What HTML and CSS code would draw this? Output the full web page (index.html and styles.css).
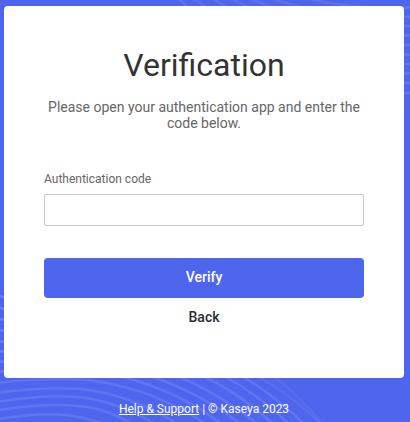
FILE: index.html
```
<!DOCTYPE html>
<html lang="en">
<head>
<meta charset="UTF-8">
<title>Verification</title>
<meta name="viewport" content="width=device-width, initial-scale=1.0">
<link rel="stylesheet" href="styles.css">
</head>
<body>
<svg class="waves" width="410" height="422" viewBox="0 0 410 422" aria-hidden="true">
    <g class="waves-top">
        <path d="M179 -1 L188 7"/>
        <path d="M194 -1 L205 7"/>
        <path d="M213 -1 L227 7"/>
        <path d="M231 -1 L248 7"/>
        <path d="M250 -1 L271 7"/>
        <path d="M273 -1 L300 7"/>
        <path d="M310 -1 Q335 5 365 7"/>
    </g>
    <g class="waves-right">
        <path d="M402 7.5h9M402 17h9M402 26h9M402 35.5h9M402 45h9M402 54.5h9M402 64h9M402 73.5h9M402 83h9M402 93h9"/>
    </g>
    <g class="waves-left">
        <path d="M-1 296l7 2M-1 307.500l7 2M-1 319l7 1M-1 330l7 1M-1 341l7 1M-1 351l7 1M-1 361l7 1M-1 371.500l7 -.5"/>
    </g>
    <g class="waves-bottom">
        <path d="M-1 382.500 C50 378 75 378 95 381 C135 387 170 400 204 423"/>
        <path d="M-1 392.500 C45 387 70 387 92 390.500 C120 395 150 407 176 423"/>
        <path d="M-1 401.500 C45 395 70 395 92 399 C112 403 135 412 153 423"/>
        <path d="M-1 410 C45 403 70 404 90 407.500 C103 410 118 416 131 423"/>
        <path d="M-1 419 C40 412 70 412 101 423"/>
        <path d="M122 377 C160 386 196 404 220 423"/>
        <path d="M153 377 C185 388 218 406 239 423"/>
        <path d="M180 377 C208 389 238 408 256 423"/>
        <path d="M205 377 C230 389 256 408 272 423"/>
        <path d="M226 377 C248 389 272 408 288 423"/>
        <path d="M243 377 C264 389 288 408 303 423"/>
        <path d="M259 377 C280 389 305 408 320 423" opacity=".6"/>
        <path d="M275 377 Q300 397 322 423" opacity=".5"/>
    </g>
</svg>
<div class="page">
    <form class="card">
        <h1>Verification</h1>
        <p class="intro">Please open your authentication app and enter the code below.</p>
        <label for="code">Authentication code</label>
        <input type="text" id="code" autocomplete="off">
        <button type="button" class="verify">Verify</button>
        <button type="button" class="back">Back</button>
    </form>
    <div class="footer"><a href="#">Help &amp; Support</a> | © Kaseya 2023</div>
</div>
</body>
</html>
```
FILE: styles.css
```
*{
    box-sizing: border-box;
}
body{
    margin: 0;
    height: 422px;
    overflow: hidden;
    background: #4e65ee;
    font-family: Roboto, "Liberation Sans", sans-serif;
}
/* decorative lines behind the card */
.waves{
    position: absolute;
    top: 0;
    left: 0;
    z-index: -1;
    fill: none;
    stroke: #fff;
    stroke-width: 2.5;
}
.waves-top{
    stroke-opacity: .08;
}
.waves-right{
    stroke-opacity: .12;
}
.waves-left{
    stroke-opacity: .16;
}
.waves-bottom{
    stroke-opacity: .11;
}
.page{
    padding: 6px 6px 0 4px;
}
.card{
    display: flex;
    flex-direction: column;
    height: 372px;
    padding: 40px;
    background: #fff;
    border-radius: 4px;
}
h1{
    margin: 0;
    font-size: 32px;
    font-weight: 400;
    line-height: 38px;
    text-align: center;
    color: #333;
}
.intro{
    margin: 15px 0 0;
    font-size: 14px;
    line-height: 16px;
    text-align: center;
    color: #666;
}
label{
    margin-top: 41px;
    font-size: 12px;
    line-height: 14px;
    color: #666;
}
input{
    height: 32px;
    margin: 8px 0 0;
    padding: 0 8px;
    border: 1px solid #c8c8c8;
    border-radius: 2px;
    outline: none;
    font: inherit;
}
button{
    border: none;
    padding: 0;
    font-family: inherit;
    font-size: 14px;
}
.verify{
    height: 40px;
    margin-top: 32px;
    padding-bottom: 2px;
    background: #4e65ee;
    border-radius: 4px;
    font-weight: 500;
    color: #fff;
}
.back{
    align-self: center;
    height: 16px;
    margin-top: 11px;
    background: none;
    font-weight: 500;
    line-height: 16px;
    color: #2a2d36;
}
.footer{
    margin-top: 24px;
    font-size: 12px;
    line-height: 14px;
    text-align: center;
    color: #fff;
}
.footer a{
    color: #fff;
}
```
